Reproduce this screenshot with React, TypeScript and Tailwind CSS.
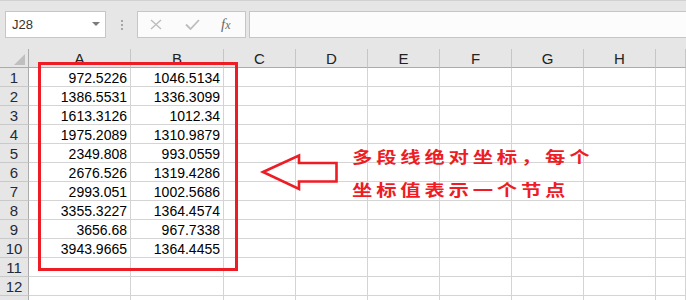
import React from "react";

const data: [string, string][] = [
  ["972.5226", "1046.5134"],
  ["1386.5531", "1336.3099"],
  ["1613.3126", "1012.34"],
  ["1975.2089", "1310.9879"],
  ["2349.808", "993.0559"],
  ["2676.526", "1319.4286"],
  ["2993.051", "1002.5686"],
  ["3355.3227", "1364.4574"],
  ["3656.68", "967.7338"],
  ["3943.9665", "1364.4455"],
  ["", ""],
  ["", ""],
  ["", ""],
];

const cols = ["A", "B", "C", "D", "E", "F", "G", "H", ""];

function Toolbar() {
  return (
    <div className="h-[49px] bg-[#e6e6e6] border-t border-[#d2d2d2] flex items-start pt-[10px]">
      <div className="ml-[5px] w-[101px] h-[27px] bg-white border border-[#c6c6c6] flex items-center pl-[6px] pr-[5px]">
        <span className="text-[13px] text-[#333] flex-1 leading-none">J28</span>
        <svg width="8" height="5" viewBox="0 0 8 5">
          <polygon points="0,0 8,0 4,4" fill="#7a7a7a" />
        </svg>
      </div>
      <div className="ml-[15px] h-[27px] flex flex-col justify-center gap-[2px]">
        <div className="w-[2px] h-[2px] bg-[#a6a6a6]" />
        <div className="w-[2px] h-[2px] bg-[#a6a6a6]" />
        <div className="w-[2px] h-[2px] bg-[#a6a6a6]" />
      </div>
      <div className="ml-[14px] w-[109px] h-[27px] bg-[#fbfbfb] border border-[#c6c6c6] flex items-center pl-[12px]">
        <svg width="12" height="11" viewBox="0 0 12 11">
          <path d="M1 1 L11 10 M11 1 L1 10" stroke="#bdbdbd" strokeWidth="1.4" fill="none" />
        </svg>
        <svg className="ml-[23px]" width="15" height="11" viewBox="0 0 15 11">
          <path d="M1 5.5 L5.5 10 L14 1" stroke="#bdbdbd" strokeWidth="1.8" fill="none" />
        </svg>
        <span className="ml-[21px] font-['Liberation_Serif',serif] italic text-[#6a6a6a] text-[15px] leading-none">
          f<span className="text-[12px]">x</span>
        </span>
      </div>
      <div className="ml-[3px] flex-1 h-[27px] bg-[#fcfcfc] border-y border-l border-[#c6c6c6]" />
    </div>
  );
}

function Grid() {
  return (
    <div className="grid grid-cols-[29px_102px_93px_72px_72px_72px_72px_72px_72px_1fr]">
      <div className="h-[19px] bg-[#e6e6e6] border-r border-b border-[#ababab] flex items-end justify-end pr-[3px] pb-[2px]">
        <svg width="11" height="11" viewBox="0 0 11 11">
          <polygon points="11,0 11,11 0,11" fill="#bfbfbf" />
        </svg>
      </div>
      {cols.map((c, i) => (
        <div
          key={"h" + i}
          className="h-[19px] bg-[#e6e6e6] border-r border-r-[#c6c6c6] border-b border-b-[#ababab] flex items-end justify-center text-[15px] leading-[15px] text-[#222] pb-[1px]"
        >
          {c}
        </div>
      ))}
      {data.map((row, r) => (
        <React.Fragment key={r}>
          <div className="h-[19px] bg-[#e6e6e6] border-r border-r-[#ababab] border-b border-b-[#c9c9c9] flex items-end justify-center text-[15px] leading-[15px] text-[#1f2a3a] pb-[1px]">
            {r < 12 ? r + 1 : ""}
          </div>
          <div className="h-[19px] border-r border-b border-[#d4d4d4] flex items-end justify-end pr-[3px] text-[14px] leading-[14px] text-black pb-[1px]">
            {row[0]}
          </div>
          <div className="h-[19px] border-r border-b border-[#d4d4d4] flex items-end justify-end pr-[3px] text-[14px] leading-[14px] text-black pb-[1px]">
            {row[1]}
          </div>
          {cols.slice(2).map((_, i) => (
            <div key={i} className="h-[19px] border-r border-b border-[#d4d4d4]" />
          ))}
        </React.Fragment>
      ))}
    </div>
  );
}

export default function App() {
  return (
    <div className="relative w-[686px] h-[300px] overflow-hidden bg-white font-['Liberation_Sans',Arial,sans-serif]">
      <Toolbar />
      <Grid />
      <div className="absolute left-[38px] top-[62px] w-[200px] h-[209px] border-[3px] border-[#ee1c25]" />
      <svg className="absolute left-0 top-0" width="686" height="300" viewBox="0 0 686 300">
        <polygon
          points="263,172 299,155.5 299,163 336.5,163 336.5,181.5 299,181.5 299,189"
          fill="none"
          stroke="#ee1c25"
          strokeWidth="2.6"
        />
      </svg>
      <div className="absolute left-[352px] top-[140px] origin-left scale-x-[1.27] font-['Noto_Sans_CJK_SC',sans-serif] font-bold text-[16px] leading-[33px] tracking-[3px] text-[#ee1c25] whitespace-nowrap">
        <div>多段线绝对坐标，每个</div>
        <div>坐标值表示一个节点</div>
      </div>
    </div>
  );
}
